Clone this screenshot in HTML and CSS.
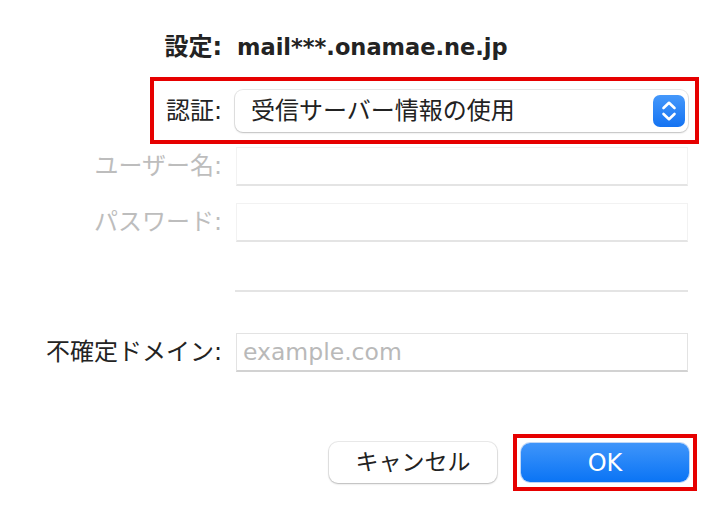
FILE: index.html
```html
<!DOCTYPE html>
<html lang="ja">
<head>
<meta charset="utf-8">
<title>設定</title>
<link rel="stylesheet" href="styles.css">
</head>
<body>
<div class="dialog">
  <div class="row title-row">
    <span class="label bold">設定:</span>
    <span class="value title-value">mail***.onamae.ne.jp</span>
  </div>

  <div class="auth-frame">
    <span class="auth-label">認証:</span>
    <div class="select">
      <span class="select-text">受信サーバー情報の使用</span>
      <span class="stepper">
        <svg width="32" height="32" viewBox="0 0 32 32" aria-hidden="true">
          <path d="M10.5 13 L16 7.8 L21.5 13" fill="none" stroke="#fff" stroke-width="2.6" stroke-linecap="round" stroke-linejoin="round"/>
          <path d="M10.5 19 L16 24.2 L21.5 19" fill="none" stroke="#fff" stroke-width="2.6" stroke-linecap="round" stroke-linejoin="round"/>
        </svg>
      </span>
    </div>
  </div>

  <div class="row field-row first">
    <span class="label disabled">ユーザー名:</span>
    <div class="field is-disabled"></div>
  </div>

  <div class="row field-row second">
    <span class="label disabled">パスワード:</span>
    <div class="field is-disabled"></div>
  </div>

  <div class="row sep-row">
    <span class="label"></span>
    <div class="sep"></div>
  </div>

  <div class="row field-row domain">
    <span class="label">不確定ドメイン:</span>
    <div class="field"><span class="placeholder">example.com</span></div>
  </div>

  <div class="buttons">
    <button class="btn cancel" type="button">キャンセル</button>
    <div class="ok-frame">
      <button class="btn ok" type="button">OK</button>
    </div>
  </div>
</div>
</body>
</html>
```

FILE: styles.css
```css
html, body {
  margin: 0;
  padding: 0;
  background: #ffffff;
}

body {
  width: 726px;
  height: 512px;
  overflow: hidden;
  font-family: "DejaVu Sans", "Noto Sans CJK JP", sans-serif;
  font-size: 24px;
  line-height: 1.2;
  color: #232323;
}

.dialog {
  padding-top: 32px;
  display: flex;
  flex-direction: column;
}

.row {
  display: flex;
  align-items: center;
  padding-left: 38px;
}

.label {
  width: 184px;
  flex: 0 0 184px;
  text-align: right;
  white-space: nowrap;
}

.value {
  margin-left: 12px;
}

.bold {
  font-weight: bold;
}

.title-row {
  height: 30px;
}

.title-value {
  font-weight: bold;
  font-size: 22.5px;
  margin-left: 15px;
}

.disabled {
  color: #bdbdbd;
}

/* auth row with red highlight frame */
.auth-frame {
  margin-top: 15px;
  margin-left: 150px;
  width: 549px;
  box-sizing: border-box;
  border: 4px solid #e60000;
  padding: 9px 7px 8px 4px;
  display: flex;
  align-items: center;
}

.auth-label {
  width: 64px;
  flex: 0 0 64px;
  text-align: right;
  white-space: nowrap;
}

.select {
  margin-left: 13px;
  flex: 1;
  height: 42px;
  box-sizing: border-box;
  background: #fff;
  border-radius: 8px;
  box-shadow: 0 0 0 1px rgba(0, 0, 0, 0.09), 0 1px 2px rgba(0, 0, 0, 0.18);
  display: flex;
  align-items: center;
  justify-content: space-between;
  padding: 0 3px 0 16px;
}

.select-text {
  white-space: nowrap;
  color: #222;
}

.stepper {
  width: 32px;
  height: 32px;
  border-radius: 7px;
  background: linear-gradient(#4598fb, #1473f2);
  display: flex;
}

/* fields */
.field {
  margin-left: 14px;
  width: 452px;
  height: 39px;
  box-sizing: border-box;
  background: #fff;
  border: 1px solid #e3e3e3;
  border-bottom: 2px solid #d2d2d2;
  display: flex;
  align-items: center;
  padding-left: 6px;
}

.field.is-disabled {
  border-color: #f2f2f2;
  border-bottom-color: #e4e4e4;
}

.field-row.first {
  margin-top: 3px;
}

.field-row.second {
  margin-top: 17px;
}

.sep-row {
  margin-top: 48px;
}

.sep {
  margin-left: 13px;
  width: 453px;
  height: 2px;
  background: #e4e4e4;
}

.field-row.domain {
  margin-top: 41px;
}

.placeholder {
  color: #b9b9b9;
  font-size: 23.5px;
  white-space: nowrap;
}

/* buttons */
.buttons {
  margin-top: 62px;
  display: flex;
  align-items: center;
  justify-content: flex-end;
  padding-right: 29px;
}

.btn {
  font-family: "DejaVu Sans", "Noto Sans CJK JP", sans-serif;
  font-size: 23px;
  line-height: 1;
  height: 40px;
  border: none;
  border-radius: 9px;
  padding: 0;
  margin: 0;
}

.cancel {
  width: 168px;
  height: 41px;
  background: #fff;
  color: #222;
  box-shadow: 0 0 0 1px rgba(0, 0, 0, 0.08), 0 1px 2px rgba(0, 0, 0, 0.22);
  margin-right: 16px;
}

.ok-frame {
  border: 4px solid #e60000;
  padding: 5px 4px 5px 4px;
  display: flex;
}

.ok {
  width: 168px;
  height: 39px;
  color: #fff;
  font-size: 24px;
  background: linear-gradient(#3f95fa, #0a74f5);
  box-shadow: 0 0 0 1px rgba(0, 90, 220, 0.25);
}
```
